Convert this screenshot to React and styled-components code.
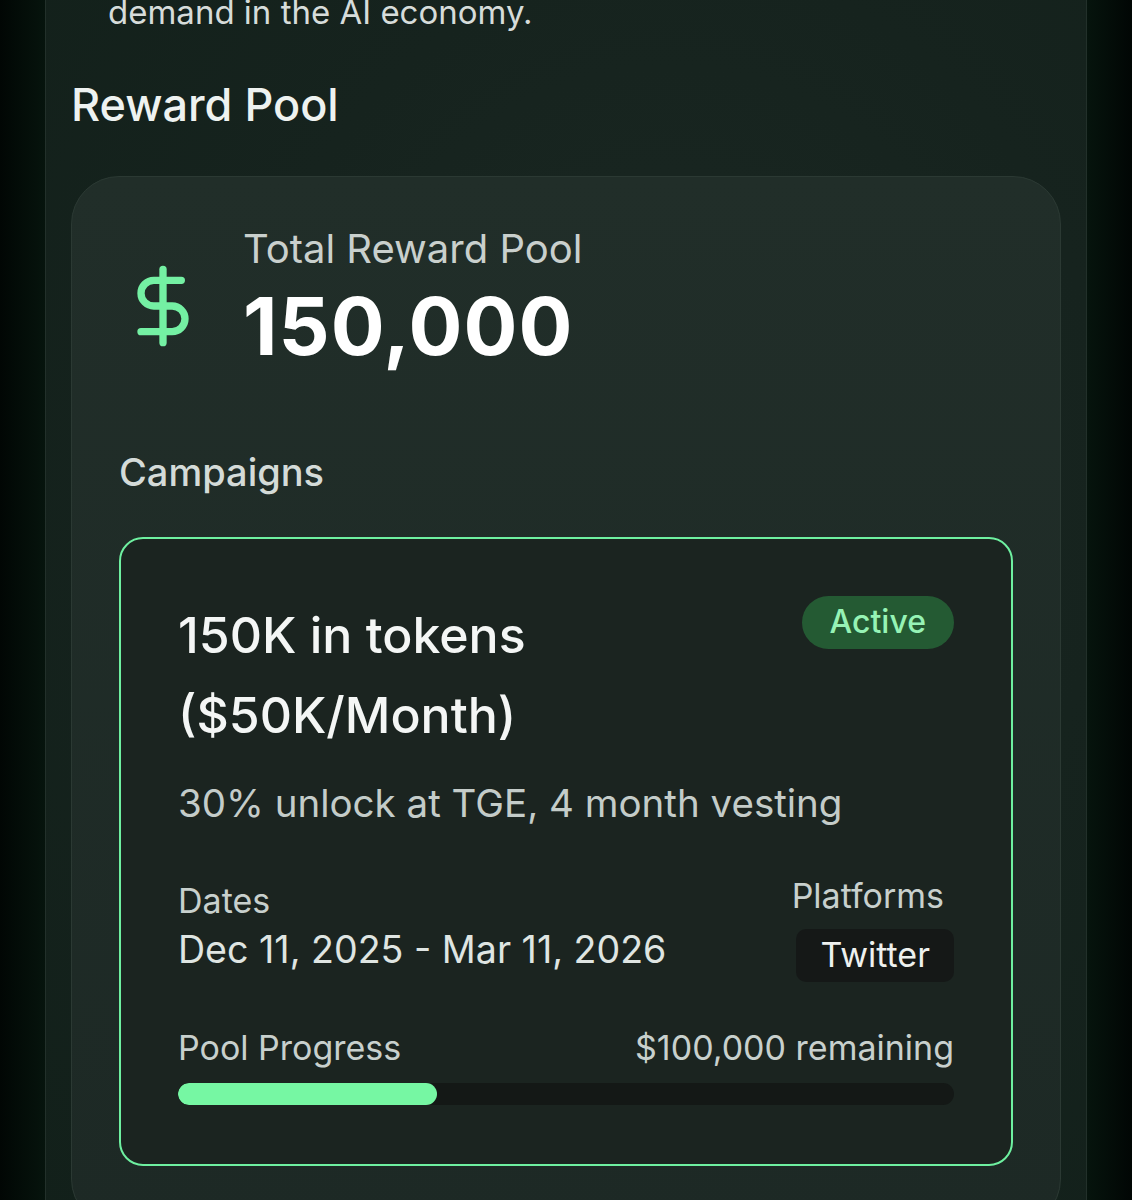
import React from 'react';
import styled, { createGlobalStyle } from 'styled-components';
import { DollarSign } from 'lucide-react';

const GlobalStyle = createGlobalStyle`
  body {
    margin: 0;
    background: #020b07;
    font-family: Inter, "Noto Sans", sans-serif;
    -webkit-font-smoothing: antialiased;
  }
`;

const Page = styled.div`
  min-height: 1200px;
  padding: 0 45px 0 45px;
  overflow: hidden;
  background: linear-gradient(90deg, #010604 0%, #06140d 4%, #06140d 96%, #010604 100%);
`;

const Panel = styled.main`
  min-height: 1200px;
  border-left: 1px solid #22302a;
  border-right: 1px solid #22302a;
  background: radial-gradient(ellipse at 60% 40%, #1b2823 0%, #16231e 50%, #12201a 100%);
  padding: 0 25px 0 25px;
`;

const Intro = styled.p`
  margin: -8px 0 0 37px;
  font-size: 33px;
  line-height: 40px;
  color: #d6dcda;
`;

const SectionTitle = styled.h2`
  margin: 46px 0 0 0;
  font-size: 45px;
  line-height: 54px;
  font-weight: 500;
  color: #eef2f0;
`;

const PoolCard = styled.section`
  margin-top: 44px;
  border: 1px solid #2b3933;
  border-radius: 48px;
  background: linear-gradient(180deg, #212e29 0%, #1d2925 100%);
  padding: 48px 47px 60px 47px;
`;

const TotalRow = styled.div`
  display: flex;
  align-items: center;
  gap: 36px;
`;

const IconBox = styled.div`
  width: 88px;
  display: flex;
  justify-content: center;
  padding-top: 8px;
  color: #74f0a3;
`;

const TotalText = styled.div`
  display: flex;
  flex-direction: column;
`;

const TotalLabel = styled.span`
  font-size: 40px;
  line-height: 48px;
  color: #c9d0cd;
`;

const TotalValue = styled.span`
  font-size: 80px;
  line-height: 106px;
  font-weight: 700;
  color: #ffffff;
  letter-spacing: 1px;
`;

const SubTitle = styled.h3`
  margin: 70px 0 0 0;
  font-size: 38px;
  line-height: 46px;
  font-weight: 500;
  color: #d4dbd8;
`;

const CampaignCard = styled.article`
  margin-top: 42px;
  border: 2.5px solid #6ef0a0;
  border-radius: 24px;
  background: #1b2420;
  padding: 56px 57px 59px 57px;
`;

const CampaignHead = styled.div`
  display: flex;
  justify-content: space-between;
  align-items: flex-start;
`;

const CampaignTitle = styled.h4`
  margin: 0;
  font-size: 50px;
  line-height: 80px;
  font-weight: 500;
  color: #f4f6f5;
  max-width: 420px;
`;

const Badge = styled.span`
  margin-top: 1px;
  padding: 6px 28px 8px;
  border-radius: 999px;
  background: #245a33;
  color: #96f3b5;
  font-size: 32px;
  line-height: 39px;
  font-weight: 500;
`;

const Vesting = styled.p`
  margin: 24px 0 0 0;
  font-size: 38.5px;
  line-height: 48px;
  color: #c4ccc9;
`;

const InfoRow = styled.div`
  display: flex;
  justify-content: space-between;
  align-items: flex-start;
  margin-top: 48px;
`;

const InfoCol = styled.div`
  display: flex;
  flex-direction: column;
  align-items: ${p => (p.$right ? 'flex-end' : 'flex-start')};
  gap: ${p => (p.$right ? '12px' : '4px')};
`;

const Label = styled.span`
  font-size: 34px;
  line-height: 42px;
  color: #c8d0cd;
  margin-top: ${p => (p.$offset ? '5px' : '0')};
  margin-right: ${p => (p.$inset ? '10px' : '0')};
`;

const Value = styled.span`
  font-size: 37.6px;
  line-height: 48px;
  color: #dfe5e2;
`;

const Chip = styled.span`
  padding: 5px 24px 6px;
  border-radius: 10px;
  background: #151817;
  font-size: 34px;
  line-height: 42px;
  color: #eef1ef;
`;

const ProgressHead = styled.div`
  display: flex;
  justify-content: space-between;
  margin-top: 45px;
`;

const Track = styled.div`
  margin-top: 14px;
  height: 22px;
  border-radius: 11px;
  background: #141816;
  overflow: hidden;
`;

const Fill = styled.div`
  height: 100%;
  border-radius: 11px;
  background: #76f7a3;
`;

const total = 150000;
const remaining = 100000;

export default function App() {
  const used = ((total - remaining) / total) * 100;
  return (
    <>
      <GlobalStyle />
      <Page>
        <Panel>
          <Intro>demand in the AI economy.</Intro>
          <SectionTitle>Reward Pool</SectionTitle>
          <PoolCard>
            <TotalRow>
              <IconBox>
                <DollarSign size={96} strokeWidth={2} />
              </IconBox>
              <TotalText>
                <TotalLabel>Total Reward Pool</TotalLabel>
                <TotalValue>150,000</TotalValue>
              </TotalText>
            </TotalRow>
            <SubTitle>Campaigns</SubTitle>
            <CampaignCard>
              <CampaignHead>
                <CampaignTitle>150K in tokens ($50K/Month)</CampaignTitle>
                <Badge>Active</Badge>
              </CampaignHead>
              <Vesting>30% unlock at TGE, 4 month vesting</Vesting>
              <InfoRow>
                <InfoCol>
                  <Label $offset>Dates</Label>
                  <Value>Dec 11, 2025 - Mar 11, 2026</Value>
                </InfoCol>
                <InfoCol $right>
                  <Label $inset>Platforms</Label>
                  <Chip>Twitter</Chip>
                </InfoCol>
              </InfoRow>
              <ProgressHead>
                <Label>Pool Progress</Label>
                <Label>$100,000 remaining</Label>
              </ProgressHead>
              <Track>
                <Fill style={{ width: `${used}%` }} />
              </Track>
            </CampaignCard>
          </PoolCard>
        </Panel>
      </Page>
    </>
  );
}
